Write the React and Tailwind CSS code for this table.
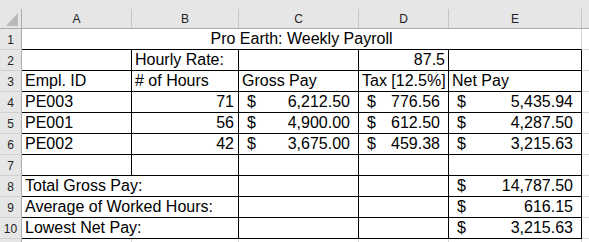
import React from "react";

const GRID = "border-[#d4d4d4]";

function Cell({ children, className = "", r = "black", b = "black", span = "" }) {
  const rc = r === "black" ? "border-r-black" : "border-r-[#d4d4d4]";
  const bc = b === "black" ? "border-b-black" : "border-b-[#d4d4d4]";
  return (
    <div
      className={`h-[21px] border-r border-b ${rc} ${bc} leading-[20px] whitespace-nowrap overflow-hidden ${span} ${className}`}
    >
      {children}
    </div>
  );
}

function RowNum({ n }) {
  return (
    <div className="h-[21px] bg-[#e6e6e6] border-r border-b border-r-[#ababab] border-b-[#d0d0d0] flex items-center justify-center pt-[2px] text-[12px] text-[#222] font-['Liberation_Sans',Arial,sans-serif]">
      {n}
    </div>
  );
}

function Text({ children }) {
  return <Cell className="pl-[3px]">{children}</Cell>;
}

function Num({ children, pr = "pr-[3px]" }) {
  return <Cell className={`text-right ${pr}`}>{children}</Cell>;
}

function Acc({ v, r = "black" }) {
  return (
    <Cell r={r} className="flex justify-between pl-[8px] pr-[8px]">
      <span>$</span>
      <span>{v}</span>
    </Cell>
  );
}

function F() {
  return <div className="h-[21px] border-b border-b-[#d4d4d4]" />;
}

const rows = [
  ["PE003", "71", "6,212.50", "776.56", "5,435.94"],
  ["PE001", "56", "4,900.00", "612.50", "4,287.50"],
  ["PE002", "42", "3,675.00", "459.38", "3,215.63"],
];

const summary = [
  ["Total Gross Pay:", "14,787.50"],
  ["Average of Worked Hours:", "616.15"],
  ["Lowest Net Pay:", "3,215.63"],
];

export default function App() {
  return (
    <div className="w-[589px] h-[242px] overflow-hidden bg-white text-black font-['Liberation_Sans',Arial,sans-serif] text-[16px]">
      <div className="grid grid-cols-[22px_110px_107px_120px_90px_133px_7px]">
        {/* Column header */}
        <div className="h-[29px] bg-[#e6e6e6] border-b border-b-[#ababab] pt-[9px]">
          <div className="h-[19px] border-r border-r-[#ababab] relative">
            <svg width="22" height="19" className="absolute left-0 top-0">
              <polygon points="18,4 18,17 6,17" fill="#b9b9b9" />
            </svg>
          </div>
        </div>
        {["A", "B", "C", "D", "E"].map((l) => (
          <div key={l} className="h-[29px] bg-[#e6e6e6] border-b border-b-[#ababab] pt-[9px]">
            <div className="h-[19px] border-r border-r-[#c6c6c6] flex items-center justify-center text-[12px] text-[#222]">
              {l}
            </div>
          </div>
        ))}
        <div className="h-[29px] bg-[#e6e6e6] border-b border-b-[#ababab]" />

        {/* Row 1 */}
        <RowNum n="1" />
        <Cell span="col-span-5" r="grid" className="text-center">
          Pro Earth: Weekly Payroll
        </Cell>
        <F />

        {/* Row 2 */}
        <RowNum n="2" />
        <Cell />
        <Text>Hourly Rate:</Text>
        <Cell />
        <Num>87.5</Num>
        <Cell />
        <F />

        {/* Row 3 */}
        <RowNum n="3" />
        <Text>Empl. ID</Text>
        <Text># of Hours</Text>
        <Text>Gross Pay</Text>
        <Text>Tax [12.5%]</Text>
        <Text>Net Pay</Text>
        <F />

        {rows.map((r, i) => (
          <React.Fragment key={r[0]}>
            <RowNum n={String(4 + i)} />
            <Text>{r[0]}</Text>
            <Num pr="pr-[4px]">{r[1]}</Num>
            <Acc v={r[2]} />
            <Acc v={r[3]} />
            <Acc v={r[4]} />
            <F />
          </React.Fragment>
        ))}

        {/* Row 7 */}
        <RowNum n="7" />
        <Cell />
        <Cell />
        <Cell />
        <Cell />
        <Cell />
        <F />

        {summary.map((s, i) => (
          <React.Fragment key={s[0]}>
            <RowNum n={String(8 + i)} />
            <Cell span="col-span-2" className="pl-[3px]">
              {s[0]}
            </Cell>
            <Cell />
            <Cell />
            <Acc v={s[1]} />
            <F />
          </React.Fragment>
        ))}

        {/* Row 11 (partial) */}
        <div className="h-[4px] bg-[#e6e6e6] border-r border-r-[#ababab]" />
        <div className="h-[4px] border-r border-r-[#d4d4d4]" />
        <div className="h-[4px] border-r border-r-[#d4d4d4]" />
        <div className="h-[4px] border-r border-r-[#d4d4d4]" />
        <div className="h-[4px] border-r border-r-[#d4d4d4]" />
        <div className="h-[4px] border-r border-r-[#d4d4d4]" />
        <div className="h-[4px]" />
      </div>
    </div>
  );
}
